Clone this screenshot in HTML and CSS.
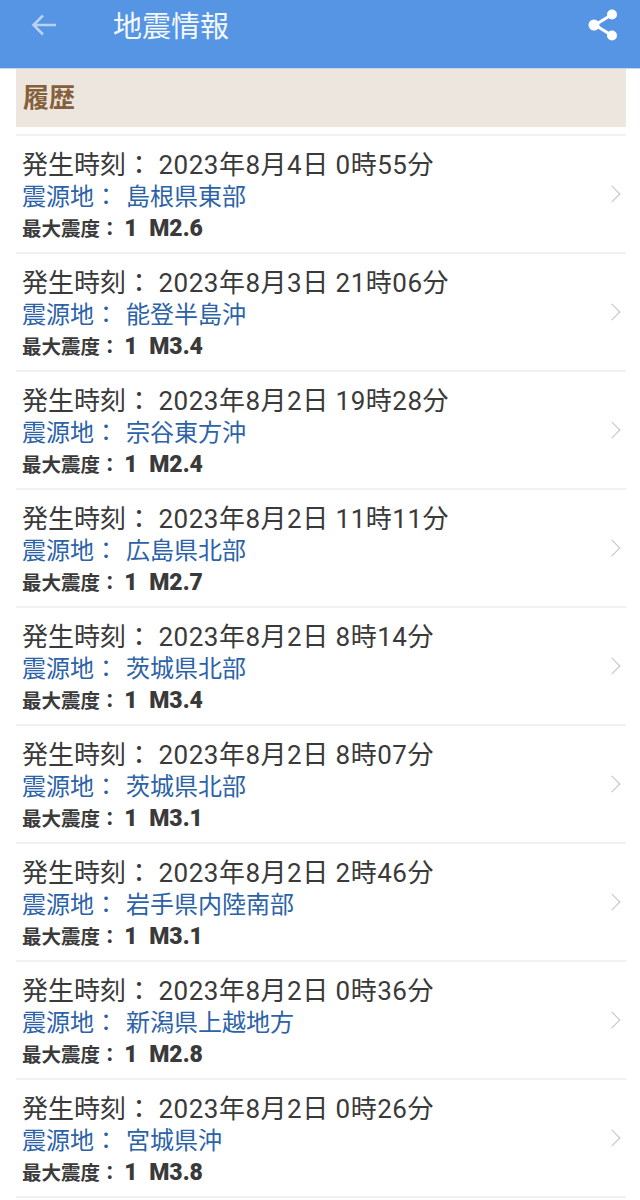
FILE: index.html
```html
<!DOCTYPE html>
<html lang="ja">
<head>
  <meta charset="UTF-8">
  <meta name="viewport" content="width=device-width,initial-scale=1.0">
  <title>地震情報</title>
  <link rel="stylesheet" href="styles.css">
</head>
<body>
  <!-- ヘッダー -->
  <header class="app-bar">
    <svg class="back-icon" width="30" height="30" viewBox="0 0 30 30"><path d="M27 15H5M14 5.500L4.500 15 14 24.500" fill="none" stroke="#b9d2f3" stroke-width="2.600"/></svg>
    <h1>地震情報</h1>
    <svg class="share-icon" width="32" height="34" viewBox="0 0 32 34"><path d="M25 6.500L8 17l17 10.500" fill="none" stroke="#fff" stroke-width="3"/><circle cx="25" cy="6.500" r="5" fill="#fff"/><circle cx="7" cy="17" r="5.500" fill="#fff"/><circle cx="25" cy="27.500" r="5" fill="#fff"/></svg>
  </header>

  <div class="container">
    <h2 class="section-title">履歴</h2>

    <ul class="quake-list">
      <li class="quake-row">
        <div class="quake-text">
          <p class="quake-time">発生時刻： <span class="date">2023年8月4日 0時55分</span></p>
          <p class="quake-place">震源地： 島根県東部</p>
          <p class="quake-scale">最大震度： <b>1&nbsp; M2.6</b></p>
        </div>
        <span class="chevron"></span>
      </li>
      <li class="quake-row">
        <div class="quake-text">
          <p class="quake-time">発生時刻： <span class="date">2023年8月3日 21時06分</span></p>
          <p class="quake-place">震源地： 能登半島沖</p>
          <p class="quake-scale">最大震度： <b>1&nbsp; M3.4</b></p>
        </div>
        <span class="chevron"></span>
      </li>
      <li class="quake-row">
        <div class="quake-text">
          <p class="quake-time">発生時刻： <span class="date">2023年8月2日 19時28分</span></p>
          <p class="quake-place">震源地： 宗谷東方沖</p>
          <p class="quake-scale">最大震度： <b>1&nbsp; M2.4</b></p>
        </div>
        <span class="chevron"></span>
      </li>
      <li class="quake-row">
        <div class="quake-text">
          <p class="quake-time">発生時刻： <span class="date">2023年8月2日 11時11分</span></p>
          <p class="quake-place">震源地： 広島県北部</p>
          <p class="quake-scale">最大震度： <b>1&nbsp; M2.7</b></p>
        </div>
        <span class="chevron"></span>
      </li>
      <li class="quake-row">
        <div class="quake-text">
          <p class="quake-time">発生時刻： <span class="date">2023年8月2日 8時14分</span></p>
          <p class="quake-place">震源地： 茨城県北部</p>
          <p class="quake-scale">最大震度： <b>1&nbsp; M3.4</b></p>
        </div>
        <span class="chevron"></span>
      </li>
      <li class="quake-row">
        <div class="quake-text">
          <p class="quake-time">発生時刻： <span class="date">2023年8月2日 8時07分</span></p>
          <p class="quake-place">震源地： 茨城県北部</p>
          <p class="quake-scale">最大震度： <b>1&nbsp; M3.1</b></p>
        </div>
        <span class="chevron"></span>
      </li>
      <li class="quake-row">
        <div class="quake-text">
          <p class="quake-time">発生時刻： <span class="date">2023年8月2日 2時46分</span></p>
          <p class="quake-place">震源地： 岩手県内陸南部</p>
          <p class="quake-scale">最大震度： <b>1&nbsp; M3.1</b></p>
        </div>
        <span class="chevron"></span>
      </li>
      <li class="quake-row">
        <div class="quake-text">
          <p class="quake-time">発生時刻： <span class="date">2023年8月2日 0時36分</span></p>
          <p class="quake-place">震源地： 新潟県上越地方</p>
          <p class="quake-scale">最大震度： <b>1&nbsp; M2.8</b></p>
        </div>
        <span class="chevron"></span>
      </li>
      <li class="quake-row">
        <div class="quake-text">
          <p class="quake-time">発生時刻： <span class="date">2023年8月2日 0時26分</span></p>
          <p class="quake-place">震源地： 宮城県沖</p>
          <p class="quake-scale">最大震度： <b>1&nbsp; M3.8</b></p>
        </div>
        <span class="chevron"></span>
      </li>
    </ul>
  </div>
</body>
</html>
```

FILE: styles.css
```css
/* リセット */
* {
  margin: 0;
  padding: 0;
  box-sizing: border-box;
}
html, body {
  height: 1200px;
  overflow: hidden;
}
body {
  font-family: Roboto, 'Noto Sans CJK JP', sans-serif;
  background-color: #fff;
  color: #333;
}

/* ヘッダー */
.app-bar {
  height: 69px;
  background-color: #5595e3;
  border-bottom: 1px solid #c9d6e6;
  display: flex;
  align-items: flex-start;
  color: #fff;
}
.back-icon {
  margin: 10px 0 0 29px;
}
.app-bar h1 {
  margin: 8px 0 0 54px;
  font-size: 29px;
  line-height: 38px;
  font-weight: 400;
  color: #f4f8fd;
}
.share-icon {
  margin: 8px 21px 0 auto;
}

.container {
  padding: 0 14px 0 16px;
}

/* 履歴 */
.section-title {
  height: 58px;
  padding-left: 7px;
  background-color: #ece6df;
  color: #85603a;
  font-size: 26px;
  line-height: 59px;
  font-weight: 700;
}

.quake-list {
  list-style: none;
  margin-top: 7px;
  border-top: 2px solid #f2f2f2;
}
.quake-row {
  height: 118px;
  padding: 12px 0 0 6px;
  border-bottom: 2px solid #f0f0f0;
  display: flex;
  justify-content: space-between;
}
.quake-time {
  font-size: 26px;
  line-height: 35px;
  color: #3a3a3a;
}
.quake-time .date {
  letter-spacing: 0.5px;
}
.quake-place {
  margin-top: -1px;
  font-size: 24px;
  line-height: 30px;
  word-spacing: 2px;
  color: #2b62a8;
}
.quake-scale {
  margin-top: 1px;
  font-size: 19.500px;
  line-height: 32px;
  font-weight: 700;
  color: #3a3a3a;
}
.quake-scale b {
  font-size: 23px;
}

/* 右矢印 */
.chevron {
  width: 12px;
  height: 12px;
  margin: 40px 8px 0 0;
  border-top: 1px solid #c4c4c4;
  border-right: 1px solid #c4c4c4;
  transform: rotate(45deg);
}
```
